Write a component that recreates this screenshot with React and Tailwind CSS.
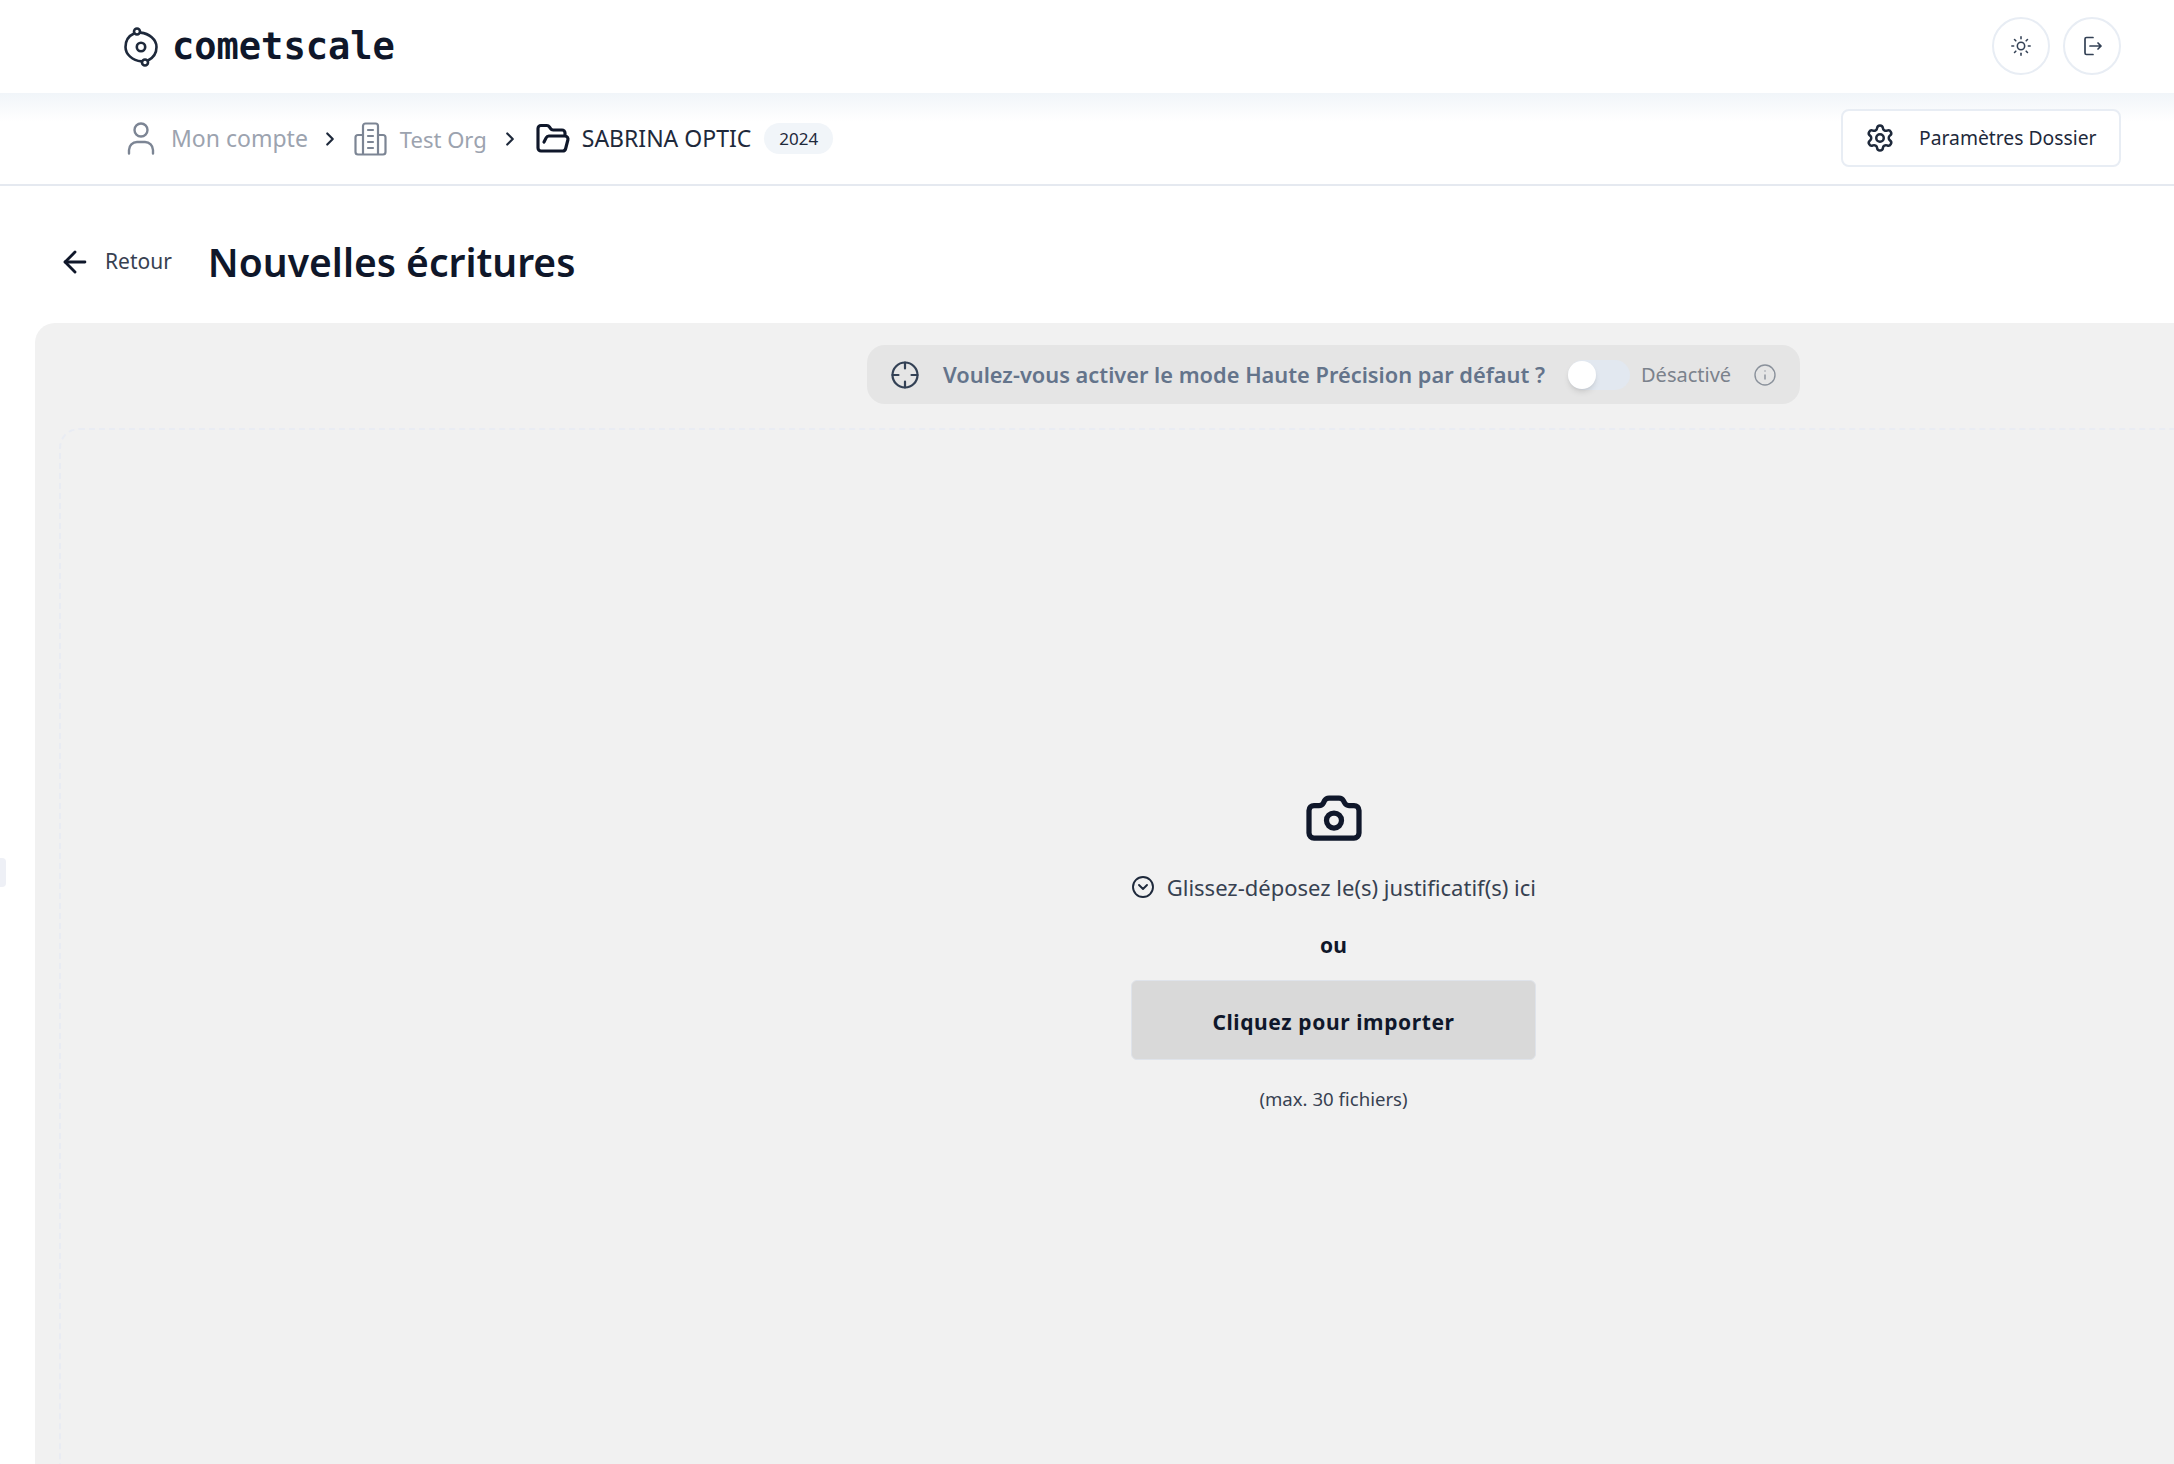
import React from "react";
import { ChevronRight, Settings, Sun, ArrowLeft, Info, Camera, CircleChevronDown, FolderOpen } from "lucide-react";

const ui = { fontFamily: '"Noto Sans", sans-serif' };

function Logo() {
  return (
    <svg width="36" height="40" viewBox="0 0 36 40" fill="none" stroke="#1e293b" strokeWidth="2.6" strokeLinecap="round">
      <circle cx="18" cy="20" r="4.2" />
      <circle cx="14" cy="4.5" r="3" />
      <circle cx="22" cy="35.5" r="3" />
      <path d="M17.5 5.6C26 6.5 33.5 12 33.5 20c0 6.5-3.6 11-8.5 13.5" />
      <path d="M11 6.5C5.5 9 2.5 14 2.5 20c0 7.5 7 13.4 16 14.4" />
    </svg>
  );
}

function Person() {
  return (
    <svg width="28" height="33" viewBox="0 0 28 33" fill="none" stroke="#7c8594" strokeWidth="2.4" strokeLinecap="round">
      <circle cx="14" cy="8" r="6.5" />
      <path d="M2 31.5V28a8 8 0 0 1 8-8h8a8 8 0 0 1 8 8v3.5" />
    </svg>
  );
}

function Building() {
  return (
    <svg width="33" height="34" viewBox="0 0 33 34" fill="none" stroke="#7c8594" strokeWidth="2.2" strokeLinecap="round" strokeLinejoin="round">
      <path d="M9 32V4a2.5 2.5 0 0 1 2.5-2.5h10A2.5 2.5 0 0 1 24 4v28" />
      <path d="M9 13H4a2.5 2.5 0 0 0-2.5 2.5V30A2.5 2.5 0 0 0 4 32.5h25a2.5 2.5 0 0 0 2.5-2.5V15.5A2.5 2.5 0 0 0 29 13h-5" />
      <path d="M14 8h5M14 14h5M14 20h5M14 26h5" />
    </svg>
  );
}

function Exit() {
  return (
    <svg width="20" height="20" viewBox="0 0 20 20" fill="none" stroke="#334155" strokeWidth="1.7" strokeLinecap="round" strokeLinejoin="round">
      <path d="M10 1.5H3.5a1.5 1.5 0 0 0-1.5 1.5v14a1.5 1.5 0 0 0 1.5 1.5H10" />
      <path d="M7 10h11M15 7l3 3-3 3" />
    </svg>
  );
}

function Target() {
  return (
    <svg width="28" height="28" viewBox="0 0 28 28" fill="none" stroke="#334155" strokeWidth="2.2" strokeLinecap="round">
      <circle cx="14" cy="14" r="12.5" />
      <path d="M14 1.5v6M14 20.5v6M1.5 14h6M20.5 14h6" />
    </svg>
  );
}

export default function App() {
  return (
    <div className="relative h-[1464px] w-full overflow-hidden bg-white" style={ui}>
      <div className="absolute left-0 top-[858px] h-[29px] w-[6px] rounded-r bg-[#eef0f6]" />

      <header className="flex h-[93px] items-center justify-between pl-[123px] pr-[53px]">
        <div className="flex items-center gap-[13px]">
          <Logo />
          <span className="text-[37px] font-bold leading-none text-[#0f172a]" style={{ fontFamily: '"DejaVu Sans Mono", monospace' }}>cometscale</span>
        </div>
        <div className="mb-[2px] flex items-center gap-[13px]">
          <button className="flex h-[58px] w-[58px] items-center justify-center rounded-full border-2 border-[#e8edf4] bg-white">
            <Sun size={22} strokeWidth={1.7} color="#334155" />
          </button>
          <button className="flex h-[58px] w-[58px] items-center justify-center rounded-full border-2 border-[#e8edf4] bg-white">
            <span className="ml-[1px] flex"><Exit /></span>
          </button>
        </div>
      </header>

      <nav className="flex h-[93px] items-center justify-between border-b-2 border-[#e5e9f0] bg-linear-to-b from-[#f1f5f9] to-white to-[32%] pl-[123px] pr-[53px]">
        <div className="flex items-center">
          <span className="ml-[4px] flex"><Person /></span>
          <span className="ml-[16px] text-[23px] leading-none text-[#9ca3af]">Mon compte</span>
          <ChevronRight size={22} strokeWidth={2.4} color="#1e293b" className="ml-[11px]" />
          <span className="ml-[13px] flex"><Building /></span>
          <span className="ml-[13px] text-[22px] leading-none text-[#9ca3af]">Test Org</span>
          <ChevronRight size={22} strokeWidth={2.4} color="#1e293b" className="ml-[12px]" />
          <FolderOpen size={36} strokeWidth={2.1} color="#0f172a" className="ml-[14px]" />
          <span className="ml-[11px] text-[23px] leading-none text-[#1e293b]">SABRINA OPTIC</span>
          <span className="ml-[13px] flex h-[31px] w-[69px] items-center justify-center rounded-full bg-[#f1f5f9] text-[17px] text-[#1e293b]">2024</span>
        </div>
        <button className="mb-[1px] flex h-[58px] w-[280px] items-center rounded-lg border-2 border-[#e8edf4] bg-white pl-[22px]">
          <Settings size={30} strokeWidth={2} color="#1e293b" />
          <span className="ml-[24px] text-[19.3px] text-[#1e293b]">Paramètres Dossier</span>
        </button>
      </nav>

      <div className="flex h-[137px] items-center pl-[58px] pt-[14px]">
        <ArrowLeft size={34} strokeWidth={2} color="#0f172a" />
        <span className="ml-[13px] text-[21px] text-[#374151]">Retour</span>
        <h1 className="ml-[36px] text-[39px] font-semibold leading-none text-[#0f172a]">Nouvelles écritures</h1>
      </div>

      <main className="ml-[35px] flex w-[2597px] flex-col items-center rounded-tl-[20px] bg-[#f1f1f1] pt-[22px]">
        <div className="flex h-[59px] w-[933px] items-center rounded-[18px] bg-[#e5e5e5] pl-[24px]">
          <Target />
          <span className="ml-[24px] text-[21.8px] font-semibold leading-none text-[#64748b]">Voulez-vous activer le mode Haute Précision par défaut ?</span>
          <div className="relative ml-[23px] h-[30px] w-[62px] rounded-full bg-[#e2e8f0]">
            <span className="absolute left-0 top-px h-[28px] w-[28px] rounded-full bg-white shadow-md" />
          </div>
          <span className="ml-[11px] text-[20px] leading-none text-[#7b828c]">Désactivé</span>
          <Info size={24} strokeWidth={1.4} color="#8a919b" className="ml-[22px]" />
        </div>

        <div className="mt-[24px] flex h-[1100px] w-[2549px] flex-col items-center rounded-tl-[20px] border-2 border-dashed border-[#e9ecf3] pt-[358px]">
          <Camera size={60} strokeWidth={2.1} color="#0f172a" />
          <div className="mt-[27px] flex w-[405px] items-center justify-between">
            <CircleChevronDown size={24} strokeWidth={1.9} color="#1e293b" />
            <span className="text-[22px] leading-none text-[#374151]">Glissez-déposez le(s) justificatif(s) ici</span>
          </div>
          <span className="mt-[36px] text-[21px] font-bold leading-none text-[#0f172a]">ou</span>
          <button className="mt-[24px] flex h-[80px] w-[405px] items-center justify-center rounded-md border border-[#dfe3ea] bg-[#d9d9d9] pt-[6px] text-[21px] font-bold tracking-[0.6px] text-[#0f172a]">Cliquez pour importer</button>
          <span className="mt-[30px] text-[18.6px] leading-none text-[#374151]">(max. 30 fichiers)</span>
        </div>
      </main>
    </div>
  );
}
